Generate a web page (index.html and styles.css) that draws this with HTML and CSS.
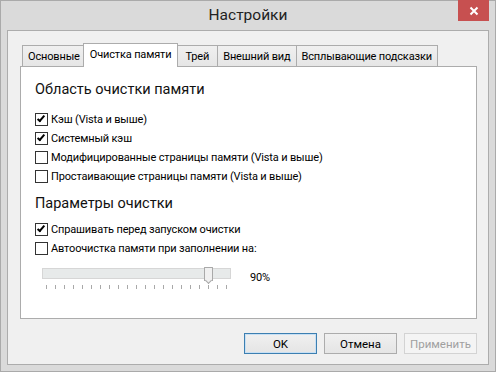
FILE: index.html
```html
<!DOCTYPE html>
<html lang="ru">
<head>
  <meta charset="UTF-8" />
  <title>Настройки</title>
  <link rel="stylesheet" href="styles.css">
</head>
<body>
  <div class="window">
    <div class="titlebar">
      <span class="title">Настройки</span>
      <button class="close" aria-label="Закрыть">
        <svg width="10" height="10" viewBox="0 0 10 10"><path d="M1.5 1.5 L8.5 8.5 M8.5 1.5 L1.5 8.5" stroke="#fff" stroke-width="2"/></svg>
      </button>
    </div>

    <div class="client">
      <!-- Tabs -->
      <div class="tabs">
        <div class="tab">Основные</div>
        <div class="tab active">Очистка памяти</div>
        <div class="tab">Трей</div>
        <div class="tab">Внешний вид</div>
        <div class="tab">Всплывающие подсказки</div>
      </div>

      <div class="panel">
        <div class="group-title">Область очистки памяти</div>
        <label class="check"><span class="box on"></span>Кэш (Vista и выше)</label>
        <label class="check"><span class="box on"></span>Системный кэш</label>
        <label class="check"><span class="box"></span>Модифицированные страницы памяти (Vista и выше)</label>
        <label class="check"><span class="box"></span>Простаивающие страницы памяти (Vista и выше)</label>

        <div class="group-title second">Параметры очистки</div>
        <label class="check"><span class="box on"></span>Спрашивать перед запуском очистки</label>
        <label class="check"><span class="box"></span>Автоочистка памяти при заполнении на:</label>

        <div class="slider-row">
          <div class="slider">
            <div class="track">
              <div class="thumb" style="left: 86%"></div>
            </div>
            <div class="ticks"></div>
          </div>
          <span class="value">90%</span>
        </div>
      </div>

      <div class="buttons">
        <button class="btn default">OK</button>
        <button class="btn">Отмена</button>
        <button class="btn" disabled>Применить</button>
      </div>
    </div>
  </div>

  <script>
    // tick marks 0..100 step 5
    const ticks = document.querySelector('.ticks');
    for (let i = 0; i <= 20; i++) {
      const t = document.createElement('span');
      ticks.appendChild(t);
    }
  </script>
</body>
</html>
```

FILE: styles.css
```css
:root {
  --frame: #dadada;
  --frame-border: #aaaaaa;
  --client: #f0f0f0;
  --line: #acacac;
  --text: #000;
  --close: #c75050;
}
*, *::before, *::after { box-sizing: border-box; }
html, body {
  margin: 0; padding: 0;
  font-family: Roboto, "Noto Sans", sans-serif;
  font-size: 11px; letter-spacing: -0.15px; color: var(--text);
}
.window {
  width: 496px; height: 372px;
  background: var(--frame);
  border: 1px solid var(--frame-border);
  display: flex; flex-direction: column;
}
.titlebar {
  position: relative;
  height: 29px;
  display: flex; align-items: center; justify-content: center;
}
.title { font-size: 15.5px; letter-spacing: 0; color: #222; margin-top: -1px; }
.close {
  position: absolute; top: -1px; right: 6px;
  width: 31px; height: 21px;
  background: var(--close); border: none; padding: 0;
  display: flex; align-items: center; justify-content: center;
}

.client {
  flex: 1;
  margin: 0 6px 6px;
  background: var(--client);
  border: 1px solid var(--line);
  padding: 12px 11px 10px 12px;
  display: flex; flex-direction: column;
}

.tabs {
  display: flex; align-items: flex-end;
  padding-left: 2px;
  height: 23px;
  position: relative; z-index: 1;
}
.tab {
  height: 21px;
  padding: 0 5px;
  border: 1px solid var(--line); border-bottom: none;
  background: linear-gradient(#f0f0f0, #e6e6e6);
  display: flex; align-items: center;
  white-space: nowrap;
  margin-left: -1px;
}
.tab:first-child { margin-left: 0; }
.tab.active {
  height: 24px;
  margin: 0 -2px -1px -3px;
  padding: 0 6px 2px;
  background: #fff;
  position: relative;
}
.tab.active + .tab { margin-left: 0; padding: 0 8px; }

.panel {
  height: 253px;
  background: #fff;
  border: 1px solid var(--line);
  padding: 13px 14px 0;
  display: flex; flex-direction: column;
}
.group-title { font-size: 14.5px; letter-spacing: 0; color: #111; margin-bottom: 10px; line-height: 20px; }
.group-title.second { margin-top: 8px; margin-bottom: 6px; }

.check {
  display: flex; align-items: center;
  height: 19px;
  white-space: nowrap;
}
.box {
  width: 13px; height: 13px;
  border: 1px solid #333;
  background: #fff;
  margin-right: 3px;
  position: relative;
  flex: none;
}
.box.on::after {
  content: "";
  position: absolute; left: 3px; top: 0px;
  width: 4px; height: 8px;
  border: solid #000; border-width: 0 2px 2px 0;
  transform: rotate(40deg);
}

.slider-row {
  display: flex; align-items: flex-start;
  margin-top: 10px; padding-left: 7px;
}
.slider { width: 189px; }
.track {
  position: relative;
  height: 11px;
  background: #e7eaea;
  border: 1px solid #d6d6d6;
}
.thumb {
  position: absolute; top: -2px;
  width: 9px; height: 14px;
  background: #f0f0f0;
  border: 1px solid #a9a9a9; border-bottom: none;
  border-radius: 1px 1px 0 0;
}
.thumb::after {
  content: "";
  position: absolute; top: 10px; left: 1px;
  width: 5px; height: 5px;
  background: #f0f0f0;
  border: solid #a9a9a9; border-width: 0 1px 1px 0;
  transform: rotate(45deg);
}
.ticks {
  display: flex; justify-content: space-between;
  padding: 0 4px;
  margin-top: 6px;
}
.ticks span { width: 1px; height: 4px; background: #a9a9a9; }
.value { margin-left: 19px; margin-top: 3px; }

.buttons {
  margin-top: auto;
  display: flex; justify-content: flex-end; gap: 7px;
}
.btn {
  width: 73px; height: 21px;
  font-family: inherit; font-size: 11.5px;
  background: linear-gradient(#f0f0f0, #e5e5e5);
  border: 1px solid #acacac;
  color: #000; padding: 0;
}
.btn.default { border-color: #3c7fb1; box-shadow: inset 0 0 0 1px #c8e0f4; }
.btn:disabled { color: #a0a0a0; border-color: #d3d3d3; background: #f4f4f4; }
```
